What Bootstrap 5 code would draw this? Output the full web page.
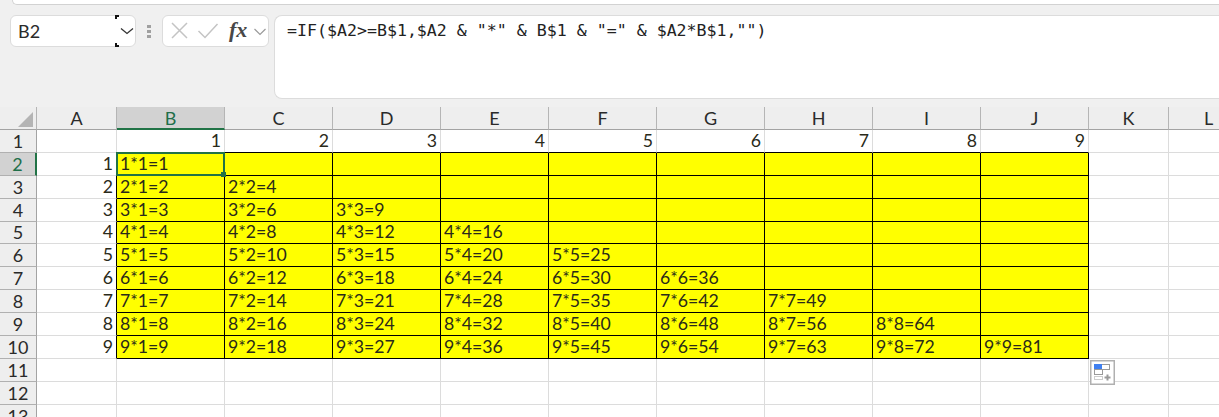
<!DOCTYPE html>
<html lang="en">
<head>
<meta charset="utf-8">
<title>Sheet</title>
<link rel="stylesheet" href="https://cdn.jsdelivr.net/npm/bootstrap@5.3.0/dist/css/bootstrap.min.css">
<style>
html,body{height:417px;overflow:hidden;background:#fff}
.ribbon-strip{height:5px;margin-left:12px;background:#fff;border:1px solid #d2d2d2;border-top:0;border-right:0;border-bottom-left-radius:8px}
.tool-area{height:107px;background:#f0f0f0;font-family:"Lato",sans-serif}
.tool-row{padding:10px 0 0 10px}
.name-box{width:126px;height:32px;background:#fff;border:1px solid #dcdcdc;border-radius:6px;position:relative;font-size:18px;font-weight:400;line-height:30px;padding-left:7px;color:#2a2a2a}
.name-arrow{position:absolute;left:104px;top:-1px;width:21px;height:32px}
.name-arrow::before,.name-arrow::after{content:"";position:absolute;left:0;width:4px;height:4px;border-left:2px solid #111}
.name-arrow::before{top:0;border-top:2px solid #111}
.name-arrow::after{bottom:0;border-bottom:2px solid #111}
.name-arrow svg{position:absolute;left:4px;top:11px}
.grip{width:26px;height:32px;padding-top:10px}
.grip i{display:block;width:4px;height:3px;background:#a0a0a0;margin:0 auto 2px}
.fx-box{width:107px;height:32px;background:#fff;border:1px solid #dcdcdc;border-radius:6px;position:relative}
.fx-box svg{position:absolute}
.fx-text{position:absolute;left:66px;top:0;font:italic 700 22px/28px "Liberation Serif",serif;color:#484848}
.formula-box{margin-left:5px;flex:1;height:84px;background:#fff;border:1px solid #dcdcdc;border-right:0;border-radius:8px 0 0 8px;font:16.6px/24px "DejaVu Sans Mono",monospace;color:#222;padding:3px 0 0 12px;white-space:pre}
.sheet{border-collapse:separate;border-spacing:0;table-layout:fixed;width:1249px;max-width:none;font:400 17.7px/1 "Lato",sans-serif;color:#2a2a1a}
.sheet th,.sheet td{padding:0 3px 0 3px;border-right:1px solid #dcdcdc;border-bottom:1px solid #dcdcdc;height:23px;white-space:nowrap;overflow:hidden;vertical-align:bottom}
.sheet td{padding-bottom:2px}
.sheet td.num{text-align:right}
.sheet thead th{height:23px;background:#eee;font-weight:400;font-size:18px;text-align:center;color:#2a2a2a;border-right-color:#b5b5b5;border-bottom-color:#a3a3a3;padding-bottom:2px}
.sheet tbody th{background:#eee;font-weight:400;font-size:18px;text-align:center;color:#2a2a2a;border-right-color:#a3a3a3;border-bottom-color:#b0b0b0;padding:0 0 2px}
.short-row th,.short-row td{height:22px}
.sheet thead th.col-on{background:#d2d2d2;color:#1f6f4a;border-bottom:2px solid #217346;padding-bottom:1px}
.sheet tbody th.row-on{background:#d2d2d2;color:#1f6f4a;border-right:2px solid #217346}
.sheet td.hit{background:#ff0;border-right-color:#000;border-bottom-color:#000}
.sheet td.edge-r{border-right-color:#000}
.sheet td.edge-b{border-bottom-color:#000}
.corner{position:relative}
.corner svg{position:absolute;left:18px;top:5px}
.sel-cell{position:relative;overflow:visible!important}
.sel-ring{position:absolute;left:-1px;top:-1px;right:-1px;bottom:-1px;border:2px solid #217346;pointer-events:none}
.sel-ring::after{content:"";position:absolute;right:-3px;bottom:-3px;width:5px;height:5px;background:#217346}
.paste-tag{position:absolute;left:1090px;top:360px;display:block}
</style>
</head>
<body>
<div class="tool-area">
  <div class="ribbon-strip"></div>
  <div class="tool-row d-flex align-items-start">
    <div class="name-box">B2
      <span class="name-arrow"><svg width="16" height="10" viewBox="0 0 16 10"><path d="M2 2.500 8 7.500 14 2.500" fill="none" stroke="#333" stroke-width="1.300"/></svg></span>
    </div>
    <div class="grip"><i></i><i></i><i></i></div>
    <div class="fx-box">
      <svg style="left:7px;top:5px" width="20" height="20" viewBox="0 0 20 20"><path d="M2 2 17 17M17 2 2 17" fill="none" stroke="#c4c4c4" stroke-width="1.500"/></svg>
      <svg style="left:34px;top:5px" width="22" height="20" viewBox="0 0 22 20"><path d="M1.500 10 8 16.500 20.500 3" fill="none" stroke="#c4c4c4" stroke-width="1.500"/></svg>
      <span class="fx-text">fx</span>
      <svg style="left:90px;top:11px" width="14" height="10" viewBox="0 0 14 10"><path d="M1.500 2 7 7.500 12.500 2" fill="none" stroke="#9a9a9a" stroke-width="1.200"/></svg>
    </div>
    <div class="formula-box">=IF($A2&gt;=B$1,$A2 &amp; "*" &amp; B$1 &amp; "=" &amp; $A2*B$1,"")</div>
  </div>
</div>
<table class="sheet">
  <colgroup>
    <col style="width:37px"><col style="width:80px"><col style="width:108px"><col style="width:108px"><col style="width:108px"><col style="width:108px"><col style="width:108px"><col style="width:108px"><col style="width:108px"><col style="width:108px"><col style="width:108px"><col style="width:80px"><col style="width:80px">
  </colgroup>
  <thead>
    <tr><th class="corner"><svg width="16" height="15" viewBox="0 0 16 15"><path d="M15 0V15H0Z" fill="#b4b4b4"/></svg></th><th>A</th><th class="col-on">B</th><th>C</th><th>D</th><th>E</th><th>F</th><th>G</th><th>H</th><th>I</th><th>J</th><th>K</th><th>L</th></tr>
  </thead>
  <tbody>
    <tr><th>1</th><td></td><td class="num edge-b">1</td><td class="num edge-b">2</td><td class="num edge-b">3</td><td class="num edge-b">4</td><td class="num edge-b">5</td><td class="num edge-b">6</td><td class="num edge-b">7</td><td class="num edge-b">8</td><td class="num edge-b">9</td><td></td><td></td></tr>
    <tr><th class="row-on">2</th><td class="num edge-r">1</td><td class="hit sel-cell">1*1=1<span class="sel-ring"></span></td><td class="hit"></td><td class="hit"></td><td class="hit"></td><td class="hit"></td><td class="hit"></td><td class="hit"></td><td class="hit"></td><td class="hit"></td><td></td><td></td></tr>
    <tr><th>3</th><td class="num edge-r">2</td><td class="hit">2*1=2</td><td class="hit">2*2=4</td><td class="hit"></td><td class="hit"></td><td class="hit"></td><td class="hit"></td><td class="hit"></td><td class="hit"></td><td class="hit"></td><td></td><td></td></tr>
    <tr><th>4</th><td class="num edge-r">3</td><td class="hit">3*1=3</td><td class="hit">3*2=6</td><td class="hit">3*3=9</td><td class="hit"></td><td class="hit"></td><td class="hit"></td><td class="hit"></td><td class="hit"></td><td class="hit"></td><td></td><td></td></tr>
    <tr class="short-row"><th>5</th><td class="num edge-r">4</td><td class="hit">4*1=4</td><td class="hit">4*2=8</td><td class="hit">4*3=12</td><td class="hit">4*4=16</td><td class="hit"></td><td class="hit"></td><td class="hit"></td><td class="hit"></td><td class="hit"></td><td></td><td></td></tr>
    <tr><th>6</th><td class="num edge-r">5</td><td class="hit">5*1=5</td><td class="hit">5*2=10</td><td class="hit">5*3=15</td><td class="hit">5*4=20</td><td class="hit">5*5=25</td><td class="hit"></td><td class="hit"></td><td class="hit"></td><td class="hit"></td><td></td><td></td></tr>
    <tr><th>7</th><td class="num edge-r">6</td><td class="hit">6*1=6</td><td class="hit">6*2=12</td><td class="hit">6*3=18</td><td class="hit">6*4=24</td><td class="hit">6*5=30</td><td class="hit">6*6=36</td><td class="hit"></td><td class="hit"></td><td class="hit"></td><td></td><td></td></tr>
    <tr><th>8</th><td class="num edge-r">7</td><td class="hit">7*1=7</td><td class="hit">7*2=14</td><td class="hit">7*3=21</td><td class="hit">7*4=28</td><td class="hit">7*5=35</td><td class="hit">7*6=42</td><td class="hit">7*7=49</td><td class="hit"></td><td class="hit"></td><td></td><td></td></tr>
    <tr><th>9</th><td class="num edge-r">8</td><td class="hit">8*1=8</td><td class="hit">8*2=16</td><td class="hit">8*3=24</td><td class="hit">8*4=32</td><td class="hit">8*5=40</td><td class="hit">8*6=48</td><td class="hit">8*7=56</td><td class="hit">8*8=64</td><td class="hit"></td><td></td><td></td></tr>
    <tr><th>10</th><td class="num edge-r">9</td><td class="hit">9*1=9</td><td class="hit">9*2=18</td><td class="hit">9*3=27</td><td class="hit">9*4=36</td><td class="hit">9*5=45</td><td class="hit">9*6=54</td><td class="hit">9*7=63</td><td class="hit">9*8=72</td><td class="hit">9*9=81</td><td></td><td></td></tr>
    <tr><th>11</th><td></td><td></td><td></td><td></td><td></td><td></td><td></td><td></td><td></td><td></td><td></td><td></td></tr>
    <tr><th>12</th><td></td><td></td><td></td><td></td><td></td><td></td><td></td><td></td><td></td><td></td><td></td><td></td></tr>
    <tr><th>13</th><td></td><td></td><td></td><td></td><td></td><td></td><td></td><td></td><td></td><td></td><td></td><td></td></tr>
  </tbody>
</table>
<svg class="paste-tag" width="25" height="25" viewBox="0 0 25 25">
  <rect x=".75" y=".75" width="23.500" height="23.500" fill="#fff" stroke="#b0b0b0" stroke-width="1.500"/>
  <rect x="4.500" y="4.500" width="15" height="5" fill="#fff" stroke="#9a9a9a"/>
  <rect x="4" y="4" width="8" height="6" fill="#4080f0"/>
  <rect x="4.500" y="9.500" width="8" height="5" fill="#fff" stroke="#9a9a9a"/>
  <rect x="4.500" y="16.500" width="8" height="3" fill="none" stroke="#9a9a9a" stroke-dasharray="1 1"/>
  <path d="M17.500 14.500v6M14.500 17.500h6" stroke="#9a9a9a" stroke-width="2"/>
</svg>
<script src="https://cdn.jsdelivr.net/npm/bootstrap@5.3.0/dist/js/bootstrap.bundle.min.js"></script>
</body>
</html>
